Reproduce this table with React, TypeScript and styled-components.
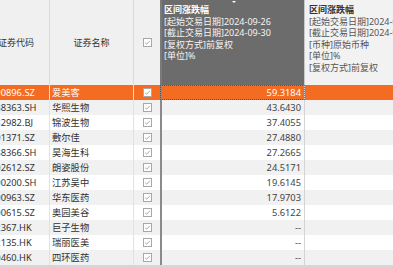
import React from "react";
import styled, { createGlobalStyle } from "styled-components";

const Global = createGlobalStyle`
  html, body { margin: 0; padding: 0; background: #fff; }
  body { font-family: "Noto Sans", "Noto Sans CJK SC", sans-serif; }
`;

const Viewport = styled.div`
  width: 393px;
  height: 267px;
  overflow: hidden;
  background: #fff;
`;

const Table = styled.div`
  margin-left: -17px;
  width: 530px;
  display: flex;
  flex-direction: column;
`;

const cols = "67px 84px 26px 145px 208px";

const HeaderRow = styled.div`
  display: grid;
  grid-template-columns: ${cols};
  height: 85px;
  background: #f0f0f0;
`;

const HeadCell = styled.div<{ $noRight?: boolean }>`
  position: relative;
  box-sizing: border-box;
  display: flex;
  align-items: center;
  justify-content: center;
  font-size: 9px;
  color: #333;
  border-right: ${(p) => (p.$noRight ? "none" : "1px solid #d9d9d9")};
`;

const HeadInfo = styled.div<{ $dark?: boolean }>`
  position: relative;
  box-sizing: border-box;
  padding-top: 4px;
  font-size: 9px;
  line-height: 11.6px;
  white-space: nowrap;
  overflow: hidden;
  background: ${(p) => (p.$dark ? "#6c6c6c" : "#f2f2f2")};
  color: ${(p) => (p.$dark ? "#f4f4f4" : "#555")};
  border-left: ${(p) => (p.$dark ? "2px solid #7a7a7a" : "none")};
  border-right: ${(p) => (p.$dark ? "1px solid #c8c8c8" : "none")};
  padding-left: ${(p) => (p.$dark ? "2px" : "4px")};
`;

const SortMark = styled.span`
  position: absolute;
  top: 1px;
  left: 70px;
  width: 0;
  height: 0;
  border-left: 2px solid transparent;
  border-right: 2px solid transparent;
  border-top: 2px solid #fff;
`;

const HeadTitle = styled.div<{ $dark?: boolean }>`
  font-weight: 700;
  color: ${(p) => (p.$dark ? "#fff" : "#333")};
`;

const Row = styled.div<{ $selected?: boolean; $alt?: boolean }>`
  display: grid;
  grid-template-columns: ${cols};
  height: 15px;
  line-height: 15px;
  font-size: 9.3px;
  background: ${(p) => (p.$selected ? "#f36c22" : p.$alt ? "#f1f1f1" : "#fff")};
  color: ${(p) => (p.$selected ? "#fff" : "#333")};
`;

const Cell = styled.div<{ $pad?: number; $border?: string }>`
  box-sizing: border-box;
  white-space: nowrap;
  overflow: hidden;
  padding-left: ${(p) => p.$pad ?? 3}px;
  border-right: ${(p) => p.$border || "none"};
`;

const CheckCell = styled.div`
  display: flex;
  align-items: center;
  justify-content: center;
`;

const ValueCell = styled.div<{ $focus?: boolean }>`
  box-sizing: border-box;
  text-align: right;
  padding-right: 3px;
  border-left: 2px solid #8a8a8a;
  border-right: 1px solid #d4d4d4;
  color: ${(p) => (p.$focus ? "#fff" : "#444")};
  outline: ${(p) => (p.$focus ? "1px dotted rgba(80,30,0,0.55)" : "none")};
  outline-offset: -1px;
`;

const Box = styled.span`
  box-sizing: border-box;
  width: 9px;
  height: 9px;
  border: 1px solid #a8a8a8;
  background: #fff;
  display: inline-flex;
  align-items: center;
  justify-content: center;
`;

const Check = () => (
  <Box>
    <svg width="7" height="7" viewBox="0 0 7 7">
      <path d="M1.2 3.8 L2.8 5.2 L5.8 1.8" fill="none" stroke="#a0a0a0" strokeWidth="0.9" />
    </svg>
  </Box>
);

const data: [string, string, string][] = [
  ["300896.SZ", "爱美客", "59.3184"],
  ["688363.SH", "华熙生物", "43.6430"],
  ["832982.BJ", "锦波生物", "37.4055"],
  ["301371.SZ", "敷尔佳", "27.4880"],
  ["688366.SH", "昊海生科", "27.2665"],
  ["002612.SZ", "朗姿股份", "24.5171"],
  ["600200.SH", "江苏吴中", "19.6145"],
  ["000963.SZ", "华东医药", "17.9703"],
  ["000615.SZ", "奥园美谷", "5.6122"],
  ["02367.HK", "巨子生物", "--"],
  ["02135.HK", "瑞丽医美", "--"],
  ["00460.HK", "四环医药", "--"],
];

const Bottom = styled.div`
  height: 2px;
  background: #d6d6d6;
`;

export default function App() {
  return (
    <Viewport>
      <Global />
      <Table>
        <HeaderRow>
          <HeadCell>证券代码</HeadCell>
          <HeadCell>证券名称</HeadCell>
          <HeadCell $noRight>
            <Check />
          </HeadCell>
          <HeadInfo $dark>
            <SortMark />
            <HeadTitle $dark>区间涨跌幅</HeadTitle>
            <div>[起始交易日期]2024-09-26</div>
            <div>[截止交易日期]2024-09-30</div>
            <div>[复权方式]前复权</div>
            <div>[单位]%</div>
          </HeadInfo>
          <HeadInfo>
            <HeadTitle>区间涨跌幅</HeadTitle>
            <div>[起始交易日期]2024-09-26</div>
            <div>[截止交易日期]2024-09-30</div>
            <div>[币种]原始币种</div>
            <div>[单位]%</div>
            <div>[复权方式]前复权</div>
          </HeadInfo>
        </HeaderRow>
        {data.map(([code, name, val], i) => (
          <Row key={code} $selected={i === 0} $alt={i % 2 === 1}>
            <Cell $pad={7} $border="1px solid #e2e2e2">{code}</Cell>
            <Cell $pad={2} $border="1px solid #e2e2e2">{name}</Cell>
            <CheckCell>
              <Check />
            </CheckCell>
            <ValueCell $focus={i === 0}>{val}</ValueCell>
            <Cell />
          </Row>
        ))}
        <Bottom />
      </Table>
    </Viewport>
  );
}
